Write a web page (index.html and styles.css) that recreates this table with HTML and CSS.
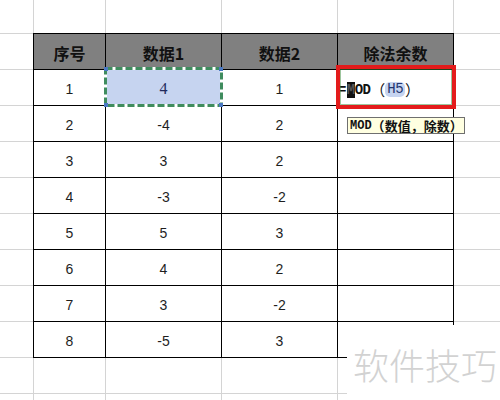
FILE: index.html
```html
<!DOCTYPE html>
<html lang="zh">
<head>
<meta charset="utf-8">
<link rel="stylesheet" href="styles.css">
</head>
<body>
<div class="sheet">
  <div class="table">
    <div class="cell head">序号</div>
    <div class="cell head">数据1</div>
    <div class="cell head">数据2</div>
    <div class="cell head">除法余数</div>

    <div class="cell">1</div>
    <div class="cell sel">4
      <svg class="ants" width="119" height="40" viewBox="0 0 119 40">
        <rect x="1.5" y="1.5" width="116" height="37" fill="none" stroke="#ffffff" stroke-width="3"/>
        <rect x="1.5" y="1.5" width="116" height="37" fill="none" stroke="#3f8c5e" stroke-width="3" stroke-dasharray="7 3"/>
        <rect x="0" y="0" width="4" height="4" fill="#4a78c2"/>
        <rect x="115" y="0" width="4" height="4" fill="#4a78c2"/>
        <rect x="0" y="36" width="4" height="4" fill="#4a78c2"/>
        <rect x="115" y="36" width="4" height="4" fill="#4a78c2"/>
      </svg>
    </div>
    <div class="cell">1</div>
    <div class="cell formula"><span class="f-txt">=<span class="caret">M</span>OD</span><span class="paren">（</span><span class="ref">H5</span><span class="paren">）</span>
      <div class="redbox"></div>
      <div class="tip"><span class="tip-fn">MOD</span><span class="tip-args">（<b>数值</b>，除数）</span></div>
    </div>

    <div class="cell">2</div><div class="cell">-4</div><div class="cell">2</div><div class="cell"></div>
    <div class="cell">3</div><div class="cell">3</div><div class="cell">2</div><div class="cell"></div>
    <div class="cell">4</div><div class="cell">-3</div><div class="cell">-2</div><div class="cell"></div>
    <div class="cell">5</div><div class="cell">5</div><div class="cell">3</div><div class="cell"></div>
    <div class="cell">6</div><div class="cell">4</div><div class="cell">2</div><div class="cell"></div>
    <div class="cell">7</div><div class="cell">3</div><div class="cell">-2</div><div class="cell"></div>
    <div class="cell">8</div><div class="cell">-5</div><div class="cell">3</div><div class="cell"></div>
  </div>
  <div class="watermark">软件技巧</div>
</div>
</body>
</html>
```

FILE: styles.css
```css
body {
  margin: 0;
  background: #fff;
}

.sheet {
  position: relative;
  width: 500px;
  height: 400px;
  overflow: hidden;
  box-sizing: border-box;
  padding: 33px 0 0 33px;
  background-color: #fff;
  background-image:
    linear-gradient(#d4d4d4, #d4d4d4),
    linear-gradient(#d4d4d4, #d4d4d4),
    linear-gradient(#d4d4d4, #d4d4d4),
    linear-gradient(#d4d4d4, #d4d4d4),
    linear-gradient(#d4d4d4, #d4d4d4),
    linear-gradient(to bottom, #d4d4d4 0, #d4d4d4 1px, transparent 1px);
  background-size: 1px 100%, 1px 100%, 1px 100%, 1px 100%, 1px 100%, 100% 36px;
  background-position: 33px 0, 105px 0, 221px 0, 337px 0, 453px 0, 0 33px;
  background-repeat: no-repeat, no-repeat, no-repeat, no-repeat, no-repeat, repeat;
}

.table {
  display: grid;
  grid-template-columns: 72px 116px 116px 116px;
  grid-auto-rows: 36px;
  width: max-content;
  border-left: 1px solid #000;
  border-top: 1px solid #000;
}

.cell {
  position: relative;
  box-sizing: border-box;
  border-right: 1px solid #000;
  border-bottom: 1px solid #000;
  background: #fff;
  display: flex;
  align-items: center;
  justify-content: center;
  padding-top: 3px;
  font-family: "Liberation Sans", sans-serif;
  font-size: 14px;
  color: #1e1e1e;
}

.head {
  background: #808080;
  font-family: "Noto Sans CJK SC", sans-serif;
  font-weight: 700;
  font-size: 16px;
  color: #111;
}

.sel {
  z-index: 1;
  background: #c6d4f0;
  color: #1f2a5c;
  font-family: "Liberation Serif", serif;
  font-size: 16px;
}

.ants {
  position: absolute;
  left: -2px;
  top: -3px;
}

.formula {
  z-index: 2;
  justify-content: flex-start;
  padding-left: 0;
  padding-top: 4px;
  font-family: "Liberation Mono", monospace;
  font-size: 14px;
  font-weight: 700;
  color: #111;
}

.f-txt {
  letter-spacing: -0.6px;
}

.caret {
  background: #111;
  color: #555;
  margin-left: 1px;
}

.paren {
  font-family: "Noto Sans CJK SC", sans-serif;
  font-weight: 400;
  font-size: 15px;
}

.ref {
  background: #c6d4f0;
  color: #23356e;
  border-radius: 5px;
  padding: 0 2px;
  font-weight: 400;
  letter-spacing: -0.5px;
  line-height: 15px;
}

.redbox {
  position: absolute;
  left: -2px;
  top: -5px;
  width: 120px;
  height: 44px;
  box-sizing: border-box;
  border: 4px solid #e31b1b;
  box-shadow: inset 0 0 0 1px rgba(60, 140, 60, 0.5);
}

.tip {
  position: absolute;
  left: 9px;
  top: 47px;
  height: 17px;
  box-sizing: border-box;
  border: 1px solid #6f6f6f;
  background: #ffffe1;
  padding: 0 1px 0 2px;
  white-space: nowrap;
  display: flex;
  align-items: center;
  color: #111;
}

.tip-fn {
  font-family: "Liberation Mono", monospace;
  font-size: 12px;
}

.tip-args {
  font-family: "Noto Sans CJK SC", sans-serif;
  font-size: 13px;
  line-height: 15px;
}

.tip-args b {
  font-weight: 700;
}

.watermark {
  position: absolute;
  left: 347px;
  top: 325px;
  right: 0;
  bottom: 0;
  background: #fff;
  display: flex;
  align-items: center;
  padding-left: 6px;
  padding-top: 2px;
  font-family: "Noto Sans CJK SC", sans-serif;
  font-weight: 300;
  font-size: 36px;
  color: #d2d2d2;
  white-space: nowrap;
}
```
